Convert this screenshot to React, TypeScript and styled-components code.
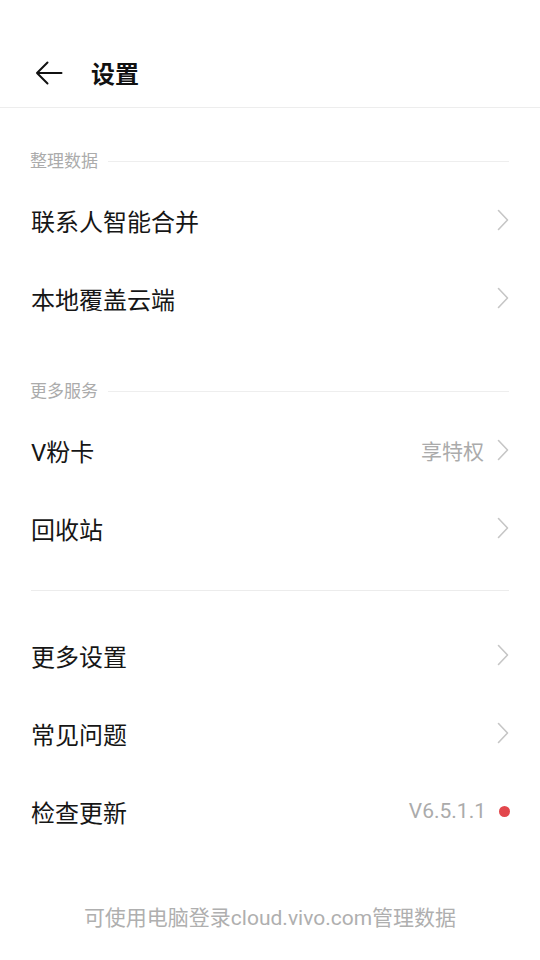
import styled, { createGlobalStyle } from 'styled-components'

const GlobalStyle = createGlobalStyle`
  body {
    margin: 0;
    background: #fff;
    font-family: Roboto, "Noto Sans CJK SC", sans-serif;
  }
`

type Item = { label: string; extra?: string; dot?: boolean }

const dataItems: Item[] = [{ label: '联系人智能合并' }, { label: '本地覆盖云端' }]
const serviceItems: Item[] = [{ label: 'V粉卡', extra: '享特权' }, { label: '回收站' }]
const otherItems: Item[] = [
  { label: '更多设置' },
  { label: '常见问题' },
  { label: '检查更新', extra: 'V6.5.1.1', dot: true },
]

function Chevron() {
  return (
    <svg width="12" height="22" viewBox="0 0 12 22" fill="none">
      <path d="M1.5 1.5 L10.5 11 L1.5 20.5" stroke="#c6c6c6" strokeWidth="1.6" strokeLinecap="round" strokeLinejoin="round" />
    </svg>
  )
}

function Row({ item }: { item: Item }) {
  return (
    <RowWrap>
      <RowLabel>{item.label}</RowLabel>
      <RowRight>
        {item.extra && <Extra>{item.extra}</Extra>}
        {item.dot ? <RedDot /> : <Chevron />}
      </RowRight>
    </RowWrap>
  )
}

export default function App() {
  return (
    <Page>
      <GlobalStyle />
      <Header>
        <svg width="28" height="24" viewBox="0 0 28 24" fill="none">
          <path d="M26.5 12 H2 M12.5 1.5 L2 12 L12.5 22.5" stroke="#111" strokeWidth="2" strokeLinecap="round" strokeLinejoin="round" />
        </svg>
        <Title>设置</Title>
      </Header>

      <SectionHead>
        <SectionLabel>整理数据</SectionLabel>
        <SectionLine />
      </SectionHead>
      {dataItems.map((it) => <Row key={it.label} item={it} />)}

      <SectionHead>
        <SectionLabel>更多服务</SectionLabel>
        <SectionLine />
      </SectionHead>
      {serviceItems.map((it) => <Row key={it.label} item={it} />)}

      <Divider />
      {otherItems.map((it) => <Row key={it.label} item={it} />)}

      <Footer>可使用电脑登录cloud.vivo.com管理数据</Footer>
    </Page>
  )
}

const Page = styled.div`
  width: 540px;
  height: 960px;
  background: #fff;
  overflow: hidden;
`
const Header = styled.div`
  height: 108px;
  box-sizing: border-box;
  border-bottom: 1px solid #ededed;
  display: flex;
  align-items: center;
  padding: 38px 0 0 35px;
  gap: 28px;
`
const Title = styled.div`
  font-size: 24px;
  font-weight: 700;
  color: #111;
`
const SectionHead = styled.div`
  display: flex;
  align-items: center;
  gap: 10px;
  padding: 42px 31px 10px 30px;
`
const SectionLabel = styled.div`
  font-size: 17px;
  line-height: 22px;
  color: #ababab;
`
const SectionLine = styled.div`
  flex: 1;
  height: 1px;
  background: #eeeeee;
`
const RowWrap = styled.div`
  height: 78px;
  display: flex;
  align-items: center;
  justify-content: space-between;
  padding: 0 31px 2px 31px;
  box-sizing: border-box;
`
const RowLabel = styled.div`
  font-size: 24px;
  color: #161616;
`
const RowRight = styled.div`
  display: flex;
  align-items: center;
  gap: 13px;
`
const Extra = styled.div`
  font-size: 21px;
  color: #ababab;
`
const RedDot = styled.div`
  width: 11px;
  height: 11px;
  border-radius: 50%;
  background: #e2474c;
  margin-right: -1px;
`
const Divider = styled.div`
  height: 1px;
  background: #ececec;
  margin: 22px 31px 26px 31px;
`
const Footer = styled.div`
  margin-top: 50px;
  text-align: center;
  font-size: 21px;
  color: #afafaf;
`
